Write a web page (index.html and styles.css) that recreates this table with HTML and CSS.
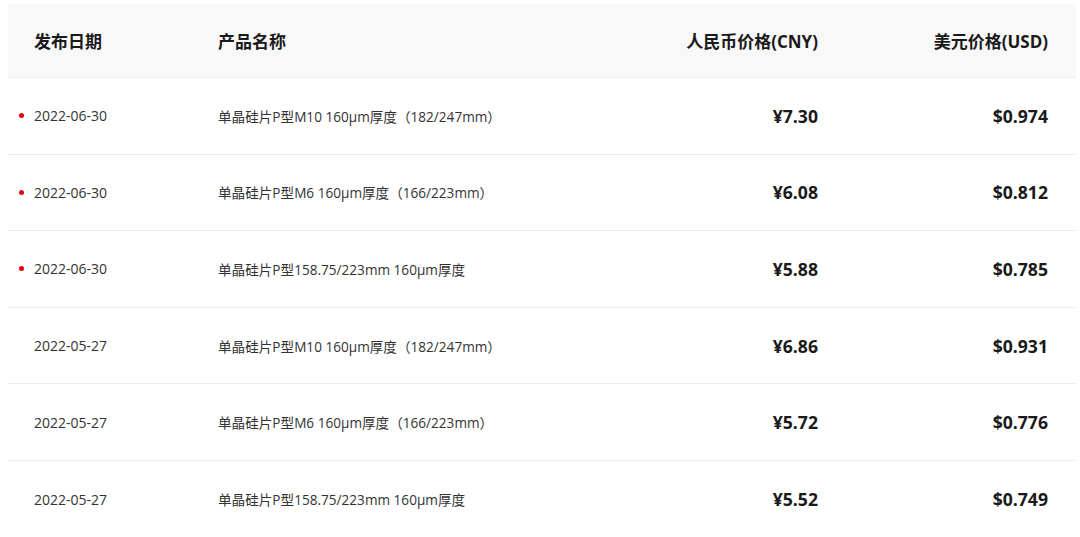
FILE: index.html
```html
<!DOCTYPE html>
<html lang="zh-CN">
<head>
<meta charset="utf-8">
<title>硅片价格</title>
<link rel="stylesheet" href="styles.css">
</head>
<body>
<div class="table">
  <div class="row head">
    <div class="cell">发布日期</div>
    <div class="cell">产品名称</div>
    <div class="cell num">人民币价格(CNY)</div>
    <div class="cell num">美元价格(USD)</div>
  </div>
  <div class="row">
    <div class="cell date new">2022-06-30</div>
    <div class="cell name">单晶硅片P型M10 160μm厚度（182/247mm）</div>
    <div class="cell num price">¥7.30</div>
    <div class="cell num price">$0.974</div>
  </div>
  <div class="row">
    <div class="cell date new">2022-06-30</div>
    <div class="cell name">单晶硅片P型M6 160μm厚度（166/223mm）</div>
    <div class="cell num price">¥6.08</div>
    <div class="cell num price">$0.812</div>
  </div>
  <div class="row">
    <div class="cell date new">2022-06-30</div>
    <div class="cell name">单晶硅片P型158.75/223mm 160μm厚度</div>
    <div class="cell num price">¥5.88</div>
    <div class="cell num price">$0.785</div>
  </div>
  <div class="row">
    <div class="cell date">2022-05-27</div>
    <div class="cell name">单晶硅片P型M10 160μm厚度（182/247mm）</div>
    <div class="cell num price">¥6.86</div>
    <div class="cell num price">$0.931</div>
  </div>
  <div class="row">
    <div class="cell date">2022-05-27</div>
    <div class="cell name">单晶硅片P型M6 160μm厚度（166/223mm）</div>
    <div class="cell num price">¥5.72</div>
    <div class="cell num price">$0.776</div>
  </div>
  <div class="row last">
    <div class="cell date">2022-05-27</div>
    <div class="cell name">单晶硅片P型158.75/223mm 160μm厚度</div>
    <div class="cell num price">¥5.52</div>
    <div class="cell num price">$0.749</div>
  </div>
</div>
</body>
</html>
```
FILE: styles.css
```css
html, body {
  background: #ffffff;
}
body {
  margin: 4px 0 0 8px;
  font-family: "Open Sans", "Noto Sans CJK SC", sans-serif;
  color: #333333;
  overflow: hidden;
}
.table {
  width: 1068px;
}
.row {
  display: grid;
  grid-template-columns: 184px 1fr 200px 230px;
  align-items: center;
  box-sizing: border-box;
  height: 76.6px;
  padding: 0 28px 0 26px;
  border-bottom: 1px solid #eeeeee;
}
.row.head {
  height: 74px;
  background: #f8f8f8;
  font-size: 17px;
  font-weight: 700;
  color: #1a1a1a;
}
.row.last {
  border-bottom: none;
}
.cell {
  white-space: nowrap;
}
.num {
  text-align: right;
}
.date {
  position: relative;
  font-size: 14px;
}
.date.new::before {
  content: "";
  position: absolute;
  left: -15px;
  top: 50%;
  width: 5px;
  height: 5px;
  margin-top: -2.5px;
  border-radius: 50%;
  background: #e60012;
}
.name {
  font-size: 13.6px;
}
.price {
  font-size: 17.6px;
  font-weight: 700;
  color: #1a1a1a;
}
```
